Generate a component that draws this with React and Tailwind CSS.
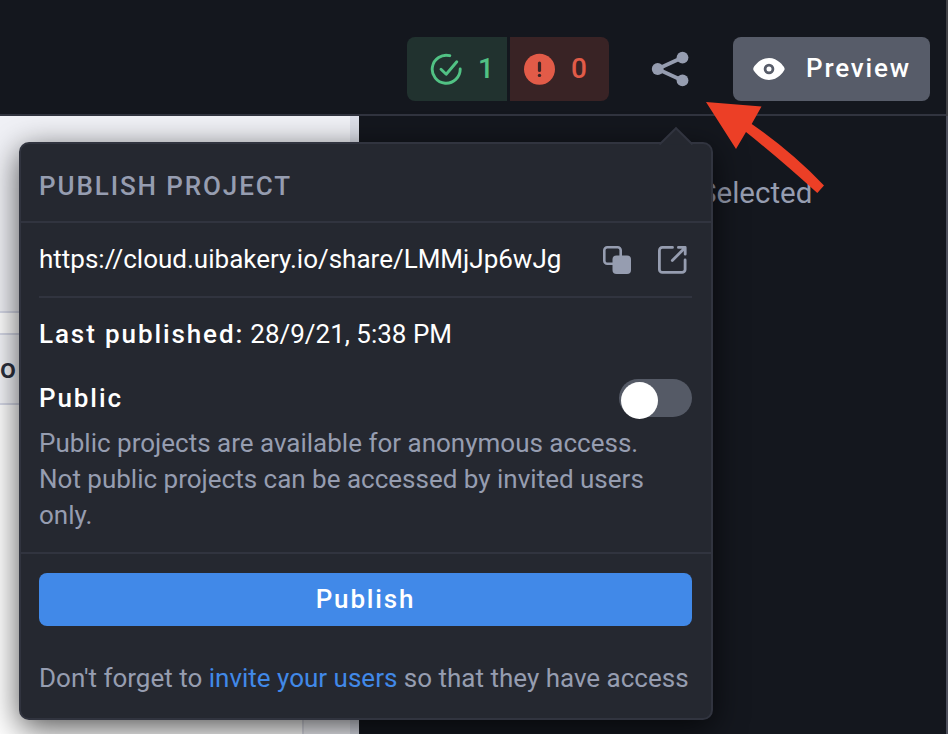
function CheckIcon() {
  return (
    <svg className="h-8 w-8" viewBox="0 0 32 32" fill="none" stroke="#51c284" strokeWidth="2.900" strokeLinecap="round" strokeLinejoin="round">
      <path d="M19.800 2.700A14 14 0 1 0 30.200 16" />
      <path d="M11 16.200l5.200 5L26.800 8.800" />
    </svg>
  );
}

function AlertIcon() {
  return (
    <svg className="h-8 w-8" viewBox="0 0 32 32">
      <circle cx="16.500" cy="16.200" r="15.500" fill="#e25b48" />
      <path d="M16.500 10v7.500" stroke="#392325" strokeWidth="3.200" strokeLinecap="round" />
      <circle cx="16.500" cy="22.400" r="1.700" fill="#392325" />
    </svg>
  );
}

function ShareIcon() {
  return (
    <svg className="h-9 w-[38px]" viewBox="0 0 38 36" fill="#969db0">
      <path d="M31.500 6.500L6.500 18l25 11.500" fill="none" stroke="#969db0" strokeWidth="3.800" />
      <circle cx="31.500" cy="6.600" r="5.900" />
      <circle cx="6.700" cy="18" r="5.900" />
      <circle cx="31.500" cy="29.400" r="5.900" />
    </svg>
  );
}

function EyeIcon() {
  return (
    <svg className="h-[22px] w-8" viewBox="0 0 32 22">
      <path fill="#fff" d="M31.200 9.400C30.400 8.100 25 0 16 0S1.600 8.100.6 9.400Q-.1 11 .6 12.300C1.500 13.800 7 22 16 22s14.400-8.200 15.200-9.700q.8-1.400 0-2.900Z" />
      <circle cx="16" cy="11" r="5.300" fill="#575c69" />
      <circle cx="16" cy="11" r="2.500" fill="#fff" />
    </svg>
  );
}

function CopyIcon() {
  return (
    <svg className="h-7 w-7" viewBox="0 0 28 28">
      <rect x="1.300" y="1.300" width="16.400" height="16.400" rx="3" fill="none" stroke="#969db0" strokeWidth="2.600" />
      <rect x="9.500" y="9.500" width="18.500" height="18.500" rx="4" fill="#969db0" />
    </svg>
  );
}

function OpenIcon() {
  return (
    <svg className="h-7 w-[29px]" viewBox="0 0 29 28" fill="none" stroke="#969db0" strokeWidth="2.800" strokeLinecap="round" strokeLinejoin="round">
      <path d="M14.500 1.400H4.400a3 3 0 0 0-3 3v19a3 3 0 0 0 3 3h19.700a3 3 0 0 0 3-3V14" />
      <path d="M14.300 14.500L27 1.800M20.400 1.400h6.800v6.800" />
    </svg>
  );
}

function Header() {
  return (
    <header className="flex h-[116px] items-start justify-end border-b-2 border-[#31343f] bg-[#14171e] pr-4 pt-[37px]">
      <div className="flex h-16 w-[100px] items-center rounded-l-lg bg-[#21322f] pl-[23px] text-[#51c284]">
        <CheckIcon />
        <span className="ml-4 text-[28px] font-medium leading-none">1</span>
      </div>
      <div className="ml-[3px] flex h-16 w-[99px] items-center rounded-r-lg bg-[#392325] pl-[13px] text-[#e25b48]">
        <AlertIcon />
        <span className="ml-4 text-[28px] font-medium leading-none">0</span>
      </div>
      <div className="ml-[42px] flex h-16 items-center">
        <ShareIcon />
      </div>
      <button className="ml-[44px] flex h-16 w-[197px] items-center rounded-lg bg-[#575c69] pl-5 text-white">
        <EyeIcon />
        <span className="ml-[21px] pb-0.5 text-[26px] font-medium leading-none tracking-[1.850px]">Preview</span>
      </button>
    </header>
  );
}

function Canvas() {
  return (
    <section className="flex w-[359px] flex-col overflow-hidden bg-white">
      <div className="flex h-[195px]">
        <div className="flex-1 bg-[#f0f1f6]" />
        <div className="w-[9px] bg-[#dcdfe9]" />
      </div>
      <div className="h-[24px] border-y-2 border-[#d5d8e6] bg-white" />
      <div className="h-[70px] border-b-2 border-[#d5d8e6] bg-[#f5f6fa] pt-[19px] text-[28px] font-medium leading-[30px] tracking-[1.850px] text-[#2b303d]">or</div>
      <div className="flex flex-1">
        <div className="w-[302px] bg-white" />
        <div className="w-[48px] border-l-2 border-[#dcdde6] bg-[#f0f1f6]" />
        <div className="flex-1 bg-[#dcdfe9]" />
      </div>
    </section>
  );
}

function PublishPopover() {
  return (
    <div className="absolute left-[19px] top-[142px] h-[578px] w-[694px] rounded-[10px] border-2 border-[#31343f] bg-[#252830] shadow-[0_8px_32px_0_rgba(0,0,0,0.68)]">
      <svg className="absolute left-[637px] top-[-18px] h-[19px] w-[36px]" viewBox="0 0 36 19">
        <path d="M1.500 18.500L18 2.200L34.500 18.500" fill="#252830" stroke="#31343f" strokeWidth="2" />
      </svg>
      <h2 className="h-[79px] border-b-2 border-[#31343f] pl-[18px] pt-[27px] text-[26px] font-medium leading-[30px] tracking-[1.900px] text-[#969db0]">PUBLISH PROJECT</h2>
      <div className="ml-[18px] mr-[19px] flex h-[75px] items-center border-b-2 border-[#31343f]">
        <span className="w-[564px] whitespace-nowrap pb-px text-[26px] leading-[30px] text-white">https://cloud.uibakery.io/share/LMMjJp6wJg</span>
        <CopyIcon />
        <span className="ml-[27px] flex"><OpenIcon /></span>
      </div>
      <div className="flex h-[256px] flex-col border-b-2 border-[#31343f] pl-[18px] pr-[19px] pt-[21px]">
        <p className="flex whitespace-pre text-[26px] leading-[30px] text-white">
          <span className="font-medium tracking-[1.900px]">Last published:</span>
          <span className="ml-[6px]">28/9/21, 5:38 PM</span>
        </p>
        <div className="mt-[30px] flex h-[38px] justify-between">
          <span className="pt-[4px] text-[26px] font-medium leading-[30px] tracking-[1.900px] text-white">Public</span>
          <span className="h-[38px] w-[73px] rounded-full bg-[#555a66] pl-[1.500px] pt-[3px]">
            <span className="block h-[37px] w-[37px] rounded-full bg-white" />
          </span>
        </div>
        <p className="mt-[8px] whitespace-nowrap text-[26px] leading-[36px] text-[#969db0]">
          Public projects are available for anonymous access.<br />Not public projects can be accessed by invited users<br />only.
        </p>
      </div>
      <div className="px-[18px] pt-[19px]">
        <button className="block h-[53px] w-[653px] rounded-lg bg-[#4189e8] text-[26px] font-medium leading-[53px] tracking-[1.850px] text-white">Publish</button>
        <p className="mt-[37px] whitespace-nowrap text-[26px] leading-[30px] text-[#969db0]">
          Don't forget to <a className="text-[#4189e8]">invite your users</a> so that they have access
        </p>
      </div>
    </div>
  );
}

export default function App() {
  return (
    <div className="flex h-[734px] w-[948px] overflow-hidden bg-[#14171e] font-['Roboto',sans-serif]">
      <div className="relative flex w-[946px] flex-col">
        <Header />
        <main className="flex flex-1">
          <Canvas />
          <aside className="flex-1 pl-[340px] pt-[61px] text-[29.500px] leading-[32px] text-[#969db0]">Selected</aside>
        </main>
        <PublishPopover />
        <svg className="absolute left-[700px] top-[95px] h-[105px] w-[130px]" viewBox="700 95 130 105">
          <path d="M706 102L761.500 106.500L751.700 124Q792 152 824 185.500L817.300 193Q780.500 159.500 746 132L736 149Z" fill="#ec3f26" />
        </svg>
      </div>
      <div className="flex w-0.5 flex-col">
        <div className="h-[116px] bg-[#414247]" />
        <div className="flex-1 bg-[#4e505c]" />
      </div>
    </div>
  );
}
